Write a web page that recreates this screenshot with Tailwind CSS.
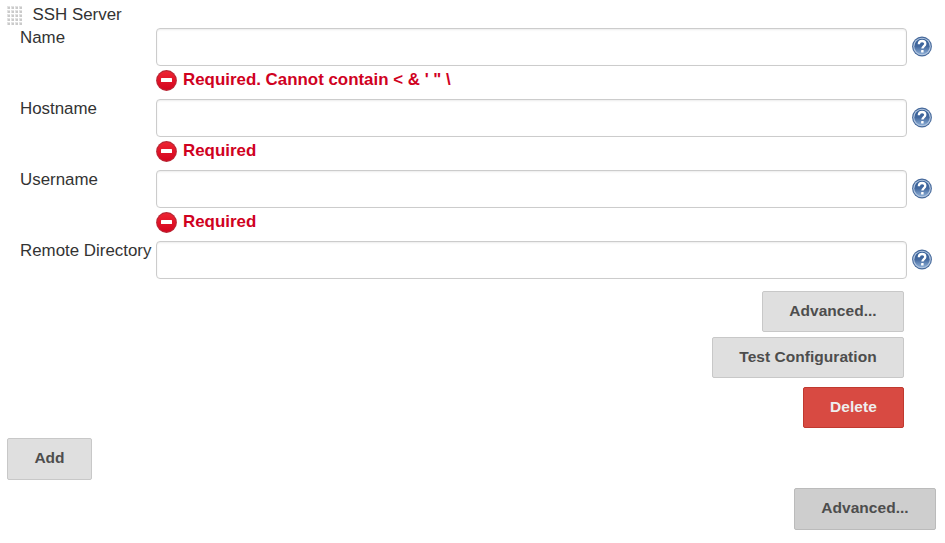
<!DOCTYPE html>
<html lang="en">
<head>
<meta charset="utf-8">
<title>SSH Server</title>
<script src="https://cdn.jsdelivr.net/npm/@tailwindcss/browser@4"></script>
</head>
<body class="w-[945px] h-[543px] overflow-hidden bg-white font-['Liberation_Sans',Arial,sans-serif] text-[16.9px] leading-5 text-[#333]">
<svg class="absolute size-0">
  <defs>
    <linearGradient id="blue" x1="0" y1="0" x2="0" y2="1"><stop offset="0" stop-color="#305b94"/><stop offset="0.5" stop-color="#44699f"/><stop offset="1" stop-color="#8aacd4"/></linearGradient>
    <linearGradient id="red" x1="0" y1="0" x2="0" y2="1"><stop offset="0" stop-color="#ee2432"/><stop offset="1" stop-color="#d4041e"/></linearGradient>
    <pattern id="dots" width="4" height="4" patternUnits="userSpaceOnUse"><rect width="3" height="3" fill="#e2e2e2"/><rect x="1" y="1" width="2" height="2" fill="#cacaca"/></pattern>
    <symbol id="help" viewBox="0 0 20 20">
      <circle cx="10" cy="10" r="9.9" fill="#46699b"/>
      <circle cx="10" cy="10" r="8.8" fill="#b4c7e0"/>
      <circle cx="10" cy="10" r="7.7" fill="url(#blue)"/>
      <path d="M6.8 7.8C6.9 5.4 8.2 4.5 10.1 4.5c2 0 3.2 1.1 3.2 2.7 0 2.3-2.9 2.4-2.9 4.9" fill="none" stroke="#fff" stroke-width="2.3"/>
      <rect x="9.1" y="13.4" width="2.5" height="2.5" rx=".5" fill="#fff"/>
    </symbol>
    <symbol id="stop" viewBox="0 0 21 21">
      <circle cx="10.5" cy="10.5" r="10.4" fill="#b92634"/>
      <circle cx="10.5" cy="10.5" r="9.3" fill="url(#red)"/>
      <rect x="5" y="7.9" width="11" height="4.2" rx=".5" fill="#fff"/>
    </symbol>
  </defs>
</svg>
<main class="flex flex-col">
  <header class="flex h-7 pl-[7px] pt-[5px]">
    <svg class="mt-px h-[19px] w-[15px]" viewBox="0 0 15 19"><rect width="15" height="19" fill="url(#dots)"/></svg>
    <h1 class="ml-[10.5px] h-5">SSH Server</h1>
  </header>

  <section class="grid grid-cols-[136px_751px_20px] auto-rows-[71px] gap-x-[5px] pl-[15px]">
    <label class="whitespace-nowrap pl-[5px]" for="name">Name</label>
    <div>
      <input id="name" class="block h-[38px] w-full rounded border border-[#ccc] px-2 shadow-[inset_0_1px_2px_rgba(0,0,0,0.075)]">
      <p class="mt-1 flex items-center gap-1.5 font-bold text-[#d0021f]"><svg class="size-[21px]"><use href="#stop"/></svg><span class="-mt-0.5">Required. Cannot contain &lt; &amp; ' " \</span></p>
    </div>
    <svg class="mt-2 h-[21px] w-5"><use href="#help"/></svg>

    <label class="whitespace-nowrap pl-[5px]" for="host">Hostname</label>
    <div>
      <input id="host" class="block h-[38px] w-full rounded border border-[#ccc] px-2 shadow-[inset_0_1px_2px_rgba(0,0,0,0.075)]">
      <p class="mt-1 flex items-center gap-1.5 font-bold text-[#d0021f]"><svg class="size-[21px]"><use href="#stop"/></svg><span class="-mt-0.5">Required</span></p>
    </div>
    <svg class="mt-2 h-[21px] w-5"><use href="#help"/></svg>

    <label class="whitespace-nowrap pl-[5px]" for="user">Username</label>
    <div>
      <input id="user" class="block h-[38px] w-full rounded border border-[#ccc] px-2 shadow-[inset_0_1px_2px_rgba(0,0,0,0.075)]">
      <p class="mt-1 flex items-center gap-1.5 font-bold text-[#d0021f]"><svg class="size-[21px]"><use href="#stop"/></svg><span class="-mt-0.5">Required</span></p>
    </div>
    <svg class="mt-2 h-[21px] w-5"><use href="#help"/></svg>
  </section>
  <section class="grid h-[50px] grid-cols-[136px_751px_20px] gap-x-[5px] pl-[15px]">
    <label class="whitespace-nowrap pl-[5px]" for="dir">Remote Directory</label>
    <input id="dir" class="block h-[38px] w-full rounded border border-[#ccc] px-2 shadow-[inset_0_1px_2px_rgba(0,0,0,0.075)]">
    <svg class="mt-2 h-[21px] w-5"><use href="#help"/></svg>
  </section>

  <div class="flex flex-col items-end pr-[41px] text-[15.5px] font-bold tracking-[0.04px] text-[#4d4d4d]">
    <button class="h-[41px] w-[142px] rounded-[2px] border border-[#c8c8c8] bg-[#dfdfdf] pb-0.5">Advanced...</button>
    <button class="mt-[5px] h-[41px] w-[192px] rounded-[2px] border border-[#c8c8c8] bg-[#dfdfdf] pb-0.5">Test Configuration</button>
    <button class="mt-[9px] h-[41px] w-[101px] rounded-[2px] border border-[#c0392f] bg-[#d84a42] pb-0.5 text-[#eee]">Delete</button>
  </div>
  <div class="mt-2.5 flex flex-col pl-[7px] pr-[9px] text-[15.5px] font-bold tracking-[0.04px] text-[#4d4d4d]">
    <button class="h-[42px] w-[85px] rounded-[2px] border border-[#c8c8c8] bg-[#dfdfdf] pb-0.5">Add</button>
    <button class="mt-2 h-[42px] w-[142px] self-end rounded-[2px] border border-[#bbb] bg-[#cecece] pb-0.5">Advanced...</button>
  </div>
</main>
</body>
</html>
